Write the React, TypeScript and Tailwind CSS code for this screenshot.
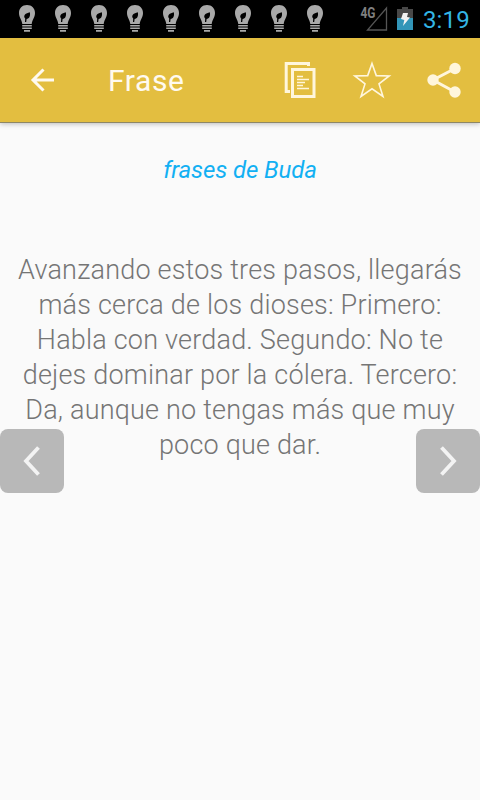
import React from "react";

const quote = [
  "Avanzando estos tres pasos, llegarás",
  "más cerca de los dioses: Primero:",
  "Habla con verdad. Segundo: No te",
  "dejes dominar por la cólera. Tercero:",
  "Da, aunque no tengas más que muy",
  "poco que dar.",
];

function BulbIcon() {
  return (
    <svg width="36" height="38" viewBox="0 0 36 38" className="shrink-0">
      <path d="M18 5c-4.800 0-8 3.400-8 8 0 4.500 2.800 6.500 3.300 11h9.400c.5-4.500 3.300-6.500 3.300-11 0-4.600-3.200-8-8-8z" fill="#a9a9a9" />
      <path d="M13.200 25h9.600v1.600h-9.600zM13.200 27.500h9.600v1.600h-9.600zM15 30h6v1.800h-6z" fill="#a9a9a9" />
      <path d="M20.800 12.200c.8 3.600-.3 6.300-3.200 6.800l-.4 3h-1.200l.2-3.400c-2.600-3 .6-5.600 4.600-6.400z" fill="#000" />
    </svg>
  );
}

function StatusBar() {
  return (
    <div className="flex h-[38px] justify-between bg-black">
      <div className="flex pl-[9px]">
        {Array.from({ length: 9 }, (_, i) => (
          <BulbIcon key={i} />
        ))}
      </div>
      <div className="flex items-center">
        <svg width="30" height="38" viewBox="0 0 30 38">
          <path d="M26.500 8v22H7.500z" fill="none" stroke="#555" strokeWidth="1.300" />
          <text x="0.500" y="17.500" fontFamily="Roboto, sans-serif" fontSize="14" fontWeight="700" fill="#808080" textLength="15" lengthAdjust="spacingAndGlyphs">4G</text>
        </svg>
        <svg width="16" height="38" viewBox="0 0 16 38" className="ml-[7px]">
          <path d="M5 7h6v2h5v9H0V9h5z" fill="#484848" />
          <path d="M0 18h16v12H0z" fill="#3295b8" />
          <path d="M6 13h5l-1 4 3 .5-7 8.500 1.300-6L4 19z" fill="#f2f2f2" />
        </svg>
        <span className="ml-[10px] mr-[10px] pt-[2px] text-[24px] leading-none tracking-[0.2px] text-[#33b5e5]">3:19</span>
      </div>
    </div>
  );
}

function Toolbar() {
  return (
    <header className="flex h-[85px] items-center border-b border-[#8e8764] bg-[#e3be40] text-[#fff6dc] shadow-[0_1px_5px_rgba(0,0,0,0.25)]">
      <svg width="84" height="84" viewBox="0 0 84 84" fill="none" stroke="#fffaf0" strokeWidth="3">
        <path d="M54 42H33M43.500 31.500 33 42l10.500 10.500" />
      </svg>
      <h1 className="ml-6 pt-px text-[30px] font-normal leading-none tracking-[0.6px] text-[#fffaf0]">Frase</h1>
      <div className="ml-auto flex">
        <svg width="72" height="84" viewBox="0 0 72 84" fill="none" stroke="currentColor">
          <path d="M44.500 28V25.500H22.200V53.500H26" strokeWidth="3" />
          <path d="M28.500 31.500h21.500v27h-21.500z" strokeWidth="3" />
          <path d="M33 38.500h6M33 41.500h12M33 44.500h8M33 47.500h6M33 50.500h12" strokeWidth="1.500" />
        </svg>
        <svg width="72" height="84" viewBox="0 0 72 84" fill="none" stroke="currentColor" strokeWidth="1.600">
          <path d="M36 25.500 40.300 37.600 53.200 38 43 45.900 47 58.500 36 50.800 25 58.500 29 45.900 18.800 38 31.700 37.600z" />
        </svg>
        <svg width="72" height="84" viewBox="0 0 72 84">
          <path d="M47 30.500 25 42l22 12" fill="none" stroke="currentColor" strokeWidth="3" />
          <circle cx="47" cy="30.500" r="5.700" fill="currentColor" />
          <circle cx="25" cy="42" r="5.700" fill="currentColor" />
          <circle cx="47" cy="54" r="5.700" fill="currentColor" />
        </svg>
      </div>
    </header>
  );
}

export default function App() {
  return (
    <div className="relative h-[800px] w-[480px] overflow-hidden bg-[#fafafa] font-[Roboto,sans-serif]">
      <StatusBar />
      <Toolbar />
      <main className="flex flex-col items-center">
        <h2 className="mt-[29px] text-[24px] italic leading-9 tracking-[-0.1px] text-[#12b0f3]">frases de Buda</h2>
        <div className="mt-[65px] text-center text-[27px] font-light leading-[35px] tracking-[0.2px] text-[#757575]">
          {quote.map((line) => (
            <p key={line} className="whitespace-nowrap">{line}</p>
          ))}
        </div>
      </main>

      {/* Previous / next buttons float over the quote */}
      <button className="absolute left-0 top-[429px] h-16 w-16 rounded-lg bg-[#b8b8b8]">
        <svg width="64" height="64" viewBox="0 0 64 64" fill="none" stroke="#f3f3f3" strokeWidth="3.800">
          <path d="M38.500 18.500 26 32l12.500 13.500" />
        </svg>
      </button>
      <button className="absolute right-0 top-[429px] h-16 w-16 rounded-lg bg-[#b8b8b8]">
        <svg width="64" height="64" viewBox="0 0 64 64" fill="none" stroke="#f3f3f3" strokeWidth="3.800">
          <path d="M25.500 18.500 38 32 25.500 45.500" />
        </svg>
      </button>
    </div>
  );
}
